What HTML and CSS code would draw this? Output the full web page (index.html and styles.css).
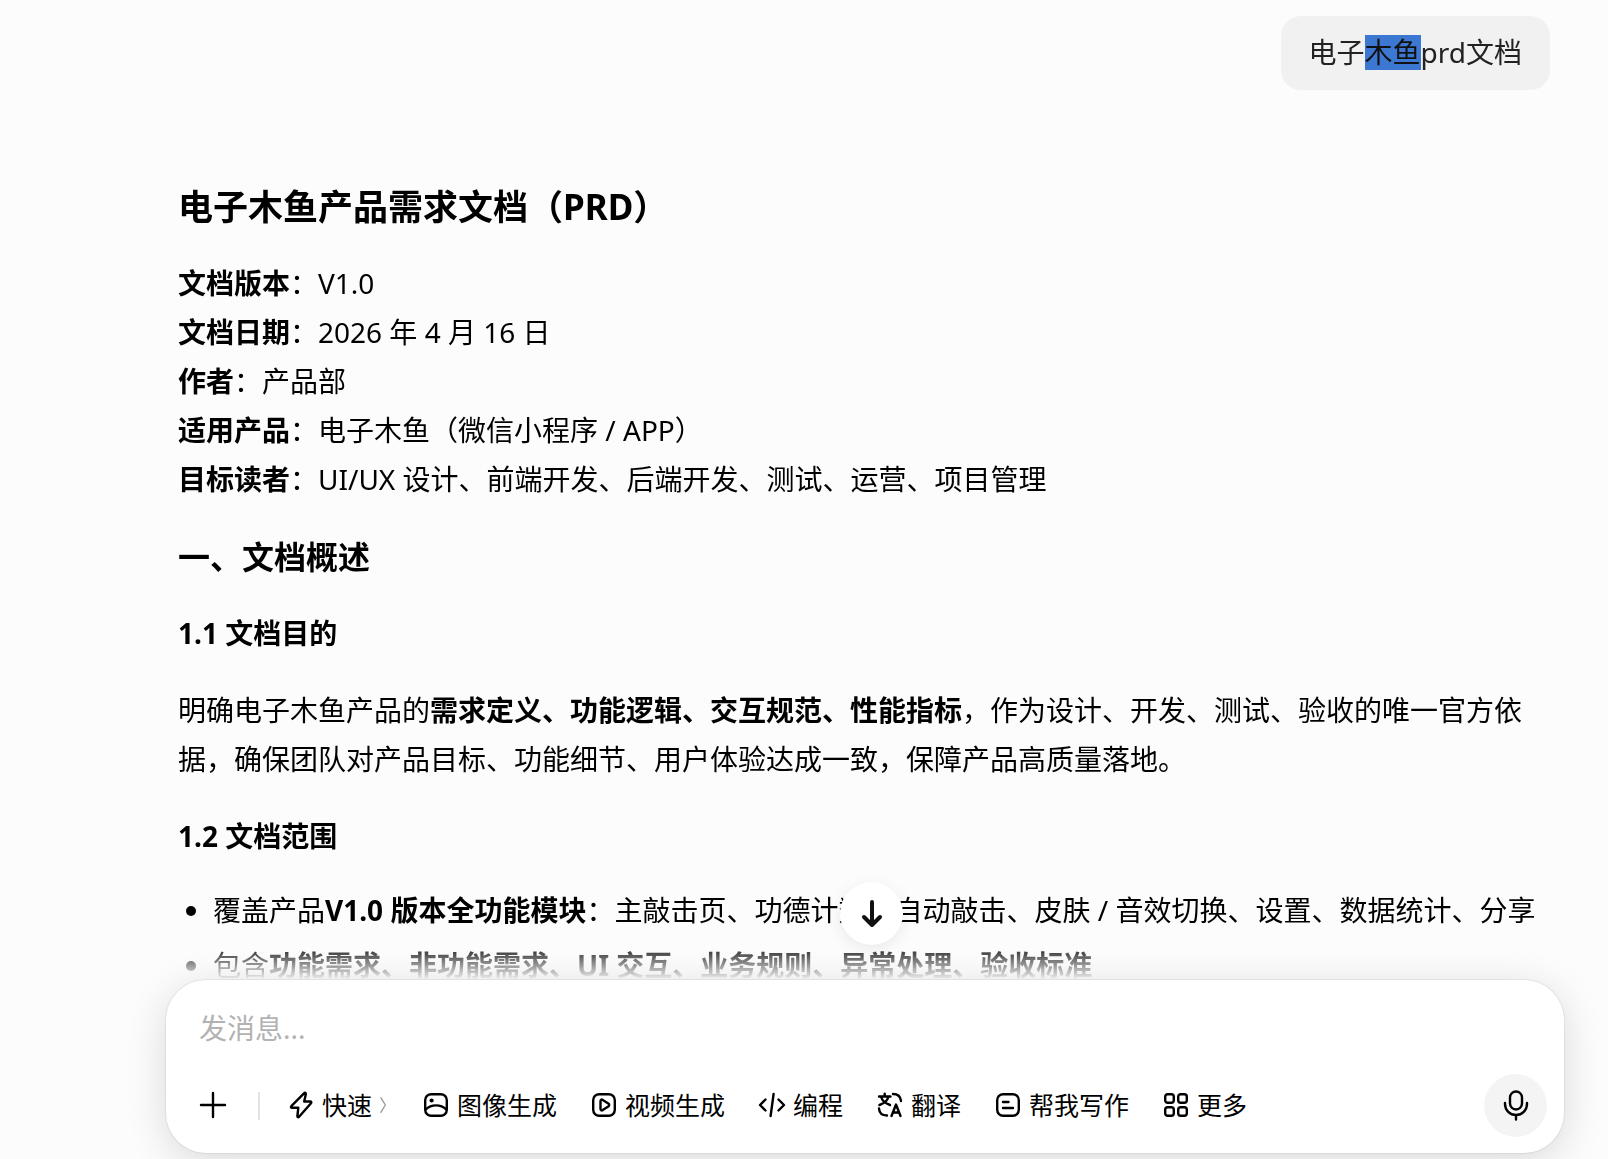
FILE: index.html
```html
<!-- index.html -->
<!DOCTYPE html>
<html lang="zh-CN">
<head>
    <meta charset="UTF-8">
    <meta name="viewport" content="width=device-width, initial-scale=1.0">
    <title>电子木鱼prd文档</title>

    <link rel="stylesheet" href="styles.css">
</head>
<body>

    <div class="chat">

        <!-- Messages -->
        <main class="messages">
            <div class="user-message">电子<mark class="selected">木鱼</mark>prd文档</div>

            <article class="answer">
                <h1>电子木鱼产品需求文档（PRD）</h1>
                <p>
                    <strong>文档版本</strong>：V1.0<br>
                    <strong>文档日期</strong>：2026 年 4 月 16 日<br>
                    <strong>作者</strong>：产品部<br>
                    <strong>适用产品</strong>：电子木鱼（微信小程序 / APP）<br>
                    <strong>目标读者</strong>：UI/UX 设计、前端开发、后端开发、测试、运营、项目管理
                </p>

                <h2>一、文档概述</h2>

                <h3>1.1 文档目的</h3>
                <p>明确电子木鱼产品的<strong>需求定义、功能逻辑、交互规范、性能指标</strong>，作为设计、开发、测试、验收的唯一官方依据，确保团队对产品目标、功能细节、用户体验达成一致，保障产品高质量落地。</p>

                <h3>1.2 文档范围</h3>
                <ul>
                    <li>覆盖产品<strong>V1.0 版本全功能模块</strong>：主敲击页、功德计数、自动敲击、皮肤 / 音效切换、设置、数据统计、分享</li>
                    <li>包含<strong>功能需求、非功能需求、UI 交互、业务规则、异常处理、验收标准</strong></li>
                </ul>
            </article>
        </main>

        <!-- Message box -->
        <form class="composer">
            <button type="button" class="scroll-down" aria-label="回到底部">
                <svg class="icon" viewBox="0 0 28 28"><path d="M14 2v23M6 17l8 8 8-8"/></svg>
            </button>

            <input type="text" class="message-input" placeholder="发消息..." aria-label="发消息">

            <div class="toolbar">
                <button type="button" class="tool" aria-label="添加">
                    <svg class="icon" viewBox="0 0 28 28"><path d="M14 2v24M2 14h24"/></svg>
                </button>
                <span class="divider"></span>
                <div class="tools">
                    <button type="button" class="tool">
                        <svg class="icon" viewBox="0 0 28 28"><path d="M17 2.300 4.300 15.200c-.7.8-.3 1.600.7 1.600h6.300l-.9 8.200c-.1 1.300.9 1.600 1.700.7L24 12.200c.7-.9.300-1.700-.8-1.700h-6l1.600-7.300c.2-1.300-.9-1.900-1.800-.9z"/></svg>
                        快速
                        <svg class="chevron" viewBox="0 0 11 20"><path d="M2 2l5 8-5 8"/></svg>
                    </button>
                    <button type="button" class="tool">
                        <svg class="icon" viewBox="0 0 28 28"><rect x="3.200" y="3.200" width="21.600" height="21.600" rx="6"/><circle class="solid" cx="9.600" cy="9.500" r="2.100"/><path d="M3.500 18.500c6-5.500 15-5.500 21 0"/></svg>
                        图像生成
                    </button>
                    <button type="button" class="tool">
                        <svg class="icon" viewBox="0 0 28 28"><rect x="3.200" y="3.200" width="21.600" height="21.600" rx="6"/><path d="M10.500 10.200v7.600c0 1.500 1 2 2.200 1.300l5.600-3.700c1.200-.8 1.200-2 0-2.800l-5.600-3.700c-1.200-.7-2.200-.2-2.200 1.300z"/></svg>
                        视频生成
                    </button>
                    <button type="button" class="tool">
                        <svg class="icon" viewBox="0 0 28 28"><path d="M7.500 8.500 2 14l5.500 5.500M20.500 8.500 26 14l-5.500 5.500M15.600 3l-3 22"/></svg>
                        编程
                    </button>
                    <button type="button" class="tool">
                        <svg class="icon" viewBox="0 0 28 28"><path d="M3 5.500h11.500M8.700 2.800v2.700M5 5.500c1 4 4.500 7 9 8.500M12.500 5.500c-1 4-4.500 7-9 8.500M17 3c4.500 0 7.500 2.500 8 7M3 17.500c.3 4.500 3 7 8 7M15.500 25l4.500-11.500L24.500 25M17 21.500h6"/></svg>
                        翻译
                    </button>
                    <button type="button" class="tool">
                        <svg class="icon" viewBox="0 0 28 28"><rect x="3.200" y="3.200" width="21.600" height="21.600" rx="6"/><path d="M9 11h5.500M9 17h10"/></svg>
                        帮我写作
                    </button>
                    <button type="button" class="tool">
                        <svg class="icon" viewBox="0 0 28 28"><rect x="3.200" y="3.200" width="8.600" height="8.600" rx="2.500"/><rect x="16.200" y="3.200" width="8.600" height="8.600" rx="2.500"/><rect x="3.200" y="16.200" width="8.600" height="8.600" rx="2.500"/><rect x="16.200" y="16.200" width="8.600" height="8.600" rx="2.500"/></svg>
                        更多
                    </button>
                </div>
                <button type="button" class="mic" aria-label="语音输入">
                    <svg viewBox="0 0 32 32"><rect x="10" y="1.500" width="12" height="18" rx="6"/><path d="M5 13v1a11 11 0 0 0 22 0v-1M16 25v4.500"/></svg>
                </button>
            </div>
        </form>

    </div>

</body>
</html>
```
FILE: styles.css
```css
* {
    box-sizing: border-box;
}

body {
    margin: 0;
    background: #fcfcfc;
    color: #000;
    font-family: "Noto Sans", "Noto Sans CJK SC", sans-serif;
    font-size: 28px;
    line-height: 49px;
}

.chat {
    display: flex;
    flex-direction: column;
    height: 100vh;
    overflow: hidden;
}

/* Messages */
.messages {
    display: flex;
    flex-direction: column;
    flex: 1;
    min-height: 0;
    overflow: hidden;
    padding: 16px 58px 0 178px;
    /* text fades out just above the message box */
    -webkit-mask-image: linear-gradient(to top, transparent, #000 38px);
    mask-image: linear-gradient(to top, transparent, #000 38px);
}

.user-message {
    align-self: flex-end;
    padding: 12px 28px 13px;
    border-radius: 20px;
    background: #f1f1f1;
    color: #222;
}

.selected {
    display: inline-block;
    background: #3c77d1;
    color: #111;
    line-height: 35px;
}

.answer {
    margin-top: 92px;
    padding-right: 1px;
}

h1, h2, h3, p, ul {
    margin: 0 0 28px;
}

h1 {
    font-size: 35px;
}

h2 {
    font-size: 32px;
}

h3 {
    font-size: 28px;
}

ul {
    margin-top: -3px;
    padding-left: 35px;
}

li {
    margin-bottom: 6px;
    white-space: nowrap;
}

/* Message box */
.composer {
    position: relative;
    margin: 0 44px 6px 166px;
    padding: 24px 17px 16px 33px;
    border-radius: 40px;
    background: #fff;
    box-shadow: 0 0 0 1px rgba(0, 0, 0, 0.06), 0 8px 40px rgba(0, 0, 0, 0.14);
}

.message-input {
    display: block;
    width: 100%;
    height: 49px;
    margin-bottom: 21px;
    padding: 0;
    border: 0;
    outline: 0;
    background: none;
    font: inherit;
}

.message-input::placeholder {
    color: #b2b2b2;
}

.toolbar {
    display: flex;
    align-items: center;
}

.divider {
    width: 2px;
    height: 28px;
    margin: 0 27px 0 31px;
    background: #e3e3e3;
}

.tools {
    display: flex;
    flex: 1;
    gap: 33px;
}

.tool {
    display: flex;
    align-items: center;
    gap: 7px;
    padding: 0 0 2px;
    border: 0;
    background: none;
    color: #000;
    font: inherit;
    font-size: 25px;
    line-height: 36px;
    white-space: nowrap;
}

svg {
    flex: none;
    fill: none;
    stroke: currentColor;
    stroke-width: 2.4;
    stroke-linecap: round;
    stroke-linejoin: round;
}

.icon {
    width: 28px;
    height: 28px;
}

.solid {
    fill: currentColor;
    stroke: none;
}

.chevron {
    width: 10px;
    height: 20px;
    stroke: #999;
    stroke-width: 1.5;
}

.mic, .scroll-down {
    display: flex;
    align-items: center;
    justify-content: center;
    width: 63px;
    height: 63px;
    padding: 0;
    border: 0;
    border-radius: 50%;
    background: #f4f4f4;
    color: #000;
}

.mic svg {
    width: 32px;
    height: 32px;
}

.scroll-down {
    position: absolute;
    bottom: calc(100% + 35px);
    left: calc(50% - 25px);
    background: #fff;
    color: #111;
    box-shadow: 0 4px 16px rgba(0, 0, 0, 0.08);
}

.scroll-down .icon {
    stroke-width: 4;
}
```
